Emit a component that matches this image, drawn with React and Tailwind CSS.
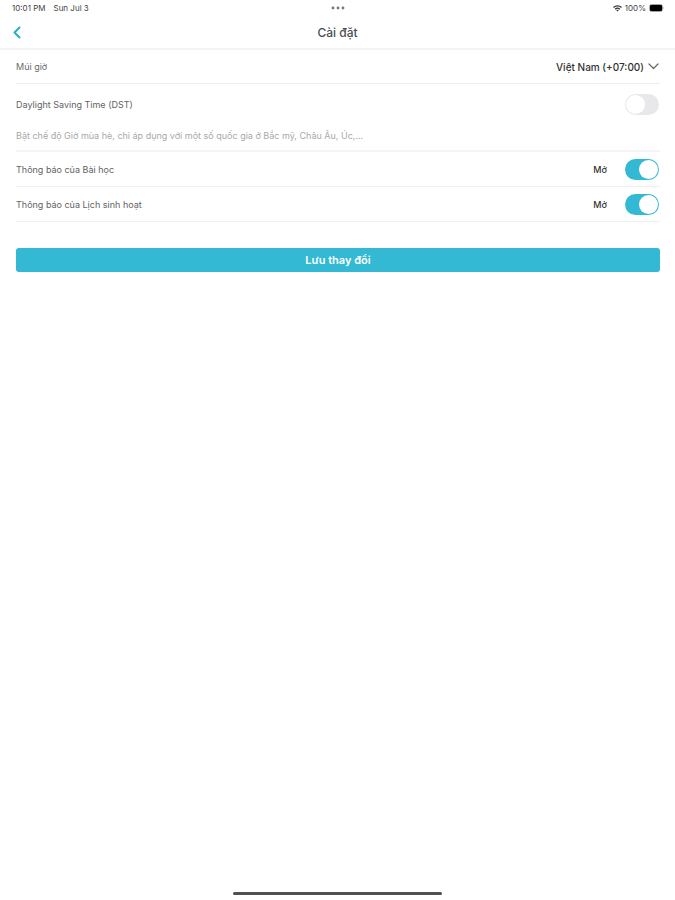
import { useState } from "react";

const timezones = ["Việt Nam (+07:00)", "Japan (+09:00)", "London (+00:00)"];

function StatusBar() {
    return (
        <div className="grid grid-cols-3 items-center h-4 pl-3 pr-[10px] text-[8px] leading-4 text-[#444444]">
            <div className="flex gap-2">
                <span>10:01 PM</span>
                <span>Sun Jul 3</span>
            </div>
            <svg className="justify-self-center" width="14" height="4" viewBox="0 0 14 4" fill="#777777">
                <circle cx="2" cy="2" r="1.4" />
                <circle cx="7" cy="2" r="1.4" />
                <circle cx="12" cy="2" r="1.4" />
            </svg>
            <div className="flex items-center justify-end gap-[3px]">
                <svg width="9" height="7" viewBox="0 0 18 14" fill="none" stroke="#333333" strokeWidth="2.6">
                    <path d="M1 5C5.5 0.7 12.5 0.7 17 5" />
                    <path d="M4.3 8.3C7 5.8 11 5.8 13.7 8.3" />
                    <path d="M6.5 10.3L9 13L11.5 10.3C10 9 8 9 6.5 10.3Z" fill="#333333" stroke="none" />
                </svg>
                <span>100%</span>
                <svg width="16" height="8" viewBox="0 0 16 8">
                    <rect x="0.5" y="0.5" width="13" height="7" rx="2" fill="none" stroke="#a3a3a3" />
                    <rect x="1" y="1" width="12" height="6" rx="1" fill="#000000" />
                    <path d="M14.5 2.5Q16 4 14.5 5.5Z" fill="#a3a3a3" />
                </svg>
            </div>
        </div>
    );
}

function Switch({ id, checked, onChange }) {
    return (
        <input
            id={id}
            type="checkbox"
            role="switch"
            checked={checked}
            onChange={(e) => onChange(e.target.checked)}
            className="appearance-none w-[34px] h-[21px] rounded-full p-px bg-[#e8e8ea] checked:bg-[#33b9d3] cursor-pointer before:block before:size-[19px] before:rounded-full before:bg-white checked:before:ml-auto"
        />
    );
}

function NotificationRow({ id, label, checked, onChange }) {
    return (
        <div className="flex items-center justify-between h-[35px] pt-px pr-px border-b border-[#f1f1f1]">
            <label htmlFor={id} className="text-[#636363]">{label}</label>
            <div className="flex items-center gap-[18px]">
                <span className="font-medium text-[#333333]">{checked ? "Mở" : "Tắt"}</span>
                <Switch id={id} checked={checked} onChange={onChange} />
            </div>
        </div>
    );
}

function App() {
    const [timezone, setTimezone] = useState(timezones[0]);
    const [dst, setDst] = useState(false);
    const [lesson, setLesson] = useState(true);
    const [activity, setActivity] = useState(true);

    return (
        <div className="flex flex-col min-h-screen bg-white font-['Inter','Noto_Sans',sans-serif] text-[9px] leading-3">
            <StatusBar />

            {/* Header */}
            <header className="grid grid-cols-3 items-center h-[34px] pt-[2px] px-3 border-b-2 border-[#f3f4f5]">
                <button type="button" aria-label="Quay lại" className="justify-self-start cursor-pointer">
                    <svg width="10" height="14" viewBox="0 0 10 14" fill="none" stroke="#22b0d0" strokeWidth="2" strokeLinecap="round" strokeLinejoin="round">
                        <path d="M7.5 1.5L2.5 6.5L7.5 11.5" />
                    </svg>
                </button>
                <h1 className="text-center text-[12px] leading-4 font-medium text-[#4a4e52]">Cài đặt</h1>
            </header>

            <main className="flex-1 pl-4 pr-[15px]">
                {/* Timezone */}
                <div className="flex items-center justify-between h-[34px] pr-px border-b border-[#ededed]">
                    <label htmlFor="timezone" className="text-[#6b6b6b]">Múi giờ</label>
                    <div className="grid items-center">
                        <select
                            id="timezone"
                            value={timezone}
                            onChange={(e) => setTimezone(e.target.value)}
                            className="col-start-1 row-start-1 appearance-none bg-transparent pr-[15px] text-[10px] leading-4 font-medium text-right text-[#333333] cursor-pointer"
                        >
                            {timezones.map((zone) => (
                                <option key={zone}>{zone}</option>
                            ))}
                        </select>
                        <svg className="col-start-1 row-start-1 justify-self-end pointer-events-none" width="11" height="7" viewBox="0 0 11 7" fill="none" stroke="#666666" strokeWidth="1.2" strokeLinecap="round" strokeLinejoin="round">
                            <path d="M1 1L5.5 5.5L10 1" />
                        </svg>
                    </div>
                </div>

                {/* Daylight saving */}
                <div className="h-[68px] pt-[10px] border-b-2 border-[#f5f5f5]">
                    <div className="flex items-center justify-between pr-px">
                        <label htmlFor="dst" className="text-[#636363]">Daylight Saving Time (DST)</label>
                        <Switch id="dst" checked={dst} onChange={setDst} />
                    </div>
                    <p className="mt-[15px] text-[#a6a9ab]">
                        Bật chế độ Giờ mùa hè, chỉ áp dụng với một số quốc gia ở Bắc mỹ, Châu Âu, Úc,...
                    </p>
                </div>

                <NotificationRow id="lesson" label="Thông báo của Bài học" checked={lesson} onChange={setLesson} />
                <NotificationRow id="activity" label="Thông báo của Lịch sinh hoạt" checked={activity} onChange={setActivity} />

                <button type="submit" className="w-full h-6 mt-[26px] rounded-[3px] bg-[#33b9d3] text-[11px] leading-4 font-semibold text-white cursor-pointer">
                    Lưu thay đổi
                </button>
            </main>

            {/* Home indicator */}
            <div className="w-[31%] h-[3px] mx-auto mb-[5px] rounded-full bg-[#515151]" />
        </div>
    );
}

export default App;
